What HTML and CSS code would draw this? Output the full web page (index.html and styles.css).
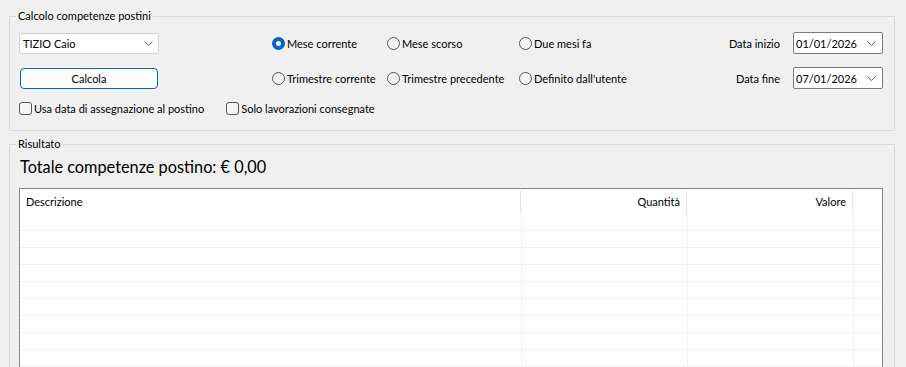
FILE: index.html
```html
<!DOCTYPE html>
<html lang="it">

<head>
	<meta charset="utf-8">
	<title>Calcolo competenze postini</title>
	<link rel="stylesheet" href="styles.css">
</head>

<body>
	<div class="window">
		<!-- parametri di calcolo -->
		<fieldset class="group group-calc">
			<legend>Calcolo competenze postini</legend>
			<div class="calc-grid">
				<div class="combo">
					<span>TIZIO Caio</span>
					<svg class="chevron" width="9" height="5" viewBox="0 0 9 5"><path d="M0.5 0.5 L4.5 4.5 L8.5 0.5" fill="none" stroke="#606060" stroke-width="1"/></svg>
				</div>
				<label class="radio r1 checked"><span class="dot"></span>Mese corrente</label>
				<label class="radio r2"><span class="dot"></span>Mese scorso</label>
				<label class="radio r3"><span class="dot"></span>Due mesi fa</label>
				<span class="date-label">Data inizio</span>
				<div class="date-box">
					<span>01/01/2026</span>
					<svg class="chevron" width="9" height="5" viewBox="0 0 9 5"><path d="M0.5 0.5 L4.5 4.5 L8.5 0.5" fill="none" stroke="#606060" stroke-width="1"/></svg>
				</div>

				<button class="btn">Calcola</button>
				<label class="radio r1"><span class="dot"></span>Trimestre corrente</label>
				<label class="radio r2"><span class="dot"></span>Trimestre precedente</label>
				<label class="radio r3"><span class="dot"></span>Definito dall'utente</label>
				<span class="date-label">Data fine</span>
				<div class="date-box">
					<span>07/01/2026</span>
					<svg class="chevron" width="9" height="5" viewBox="0 0 9 5"><path d="M0.5 0.5 L4.5 4.5 L8.5 0.5" fill="none" stroke="#606060" stroke-width="1"/></svg>
				</div>

				<div class="checks">
					<label class="check"><span class="box"></span>Usa data di assegnazione al postino</label>
					<label class="check"><span class="box"></span>Solo lavorazioni consegnate</label>
				</div>
			</div>
		</fieldset>

		<!-- risultato -->
		<fieldset class="group group-result">
			<legend>Risultato</legend>
			<h1 class="total">Totale competenze postino: € 0,00</h1>
			<div class="grid-view">
				<div class="grid-head">
					<div class="cell c-desc">Descrizione</div>
					<div class="cell c-qty">Quantità</div>
					<div class="cell c-val">Valore</div>
					<div class="cell c-pad"></div>
				</div>
				<div class="grid-body">
					<div class="row"><div class="cell c-desc"></div><div class="cell c-qty"></div><div class="cell c-val"></div><div class="cell c-pad"></div></div>
					<div class="row"><div class="cell c-desc"></div><div class="cell c-qty"></div><div class="cell c-val"></div><div class="cell c-pad"></div></div>
					<div class="row"><div class="cell c-desc"></div><div class="cell c-qty"></div><div class="cell c-val"></div><div class="cell c-pad"></div></div>
					<div class="row"><div class="cell c-desc"></div><div class="cell c-qty"></div><div class="cell c-val"></div><div class="cell c-pad"></div></div>
					<div class="row"><div class="cell c-desc"></div><div class="cell c-qty"></div><div class="cell c-val"></div><div class="cell c-pad"></div></div>
					<div class="row"><div class="cell c-desc"></div><div class="cell c-qty"></div><div class="cell c-val"></div><div class="cell c-pad"></div></div>
					<div class="row"><div class="cell c-desc"></div><div class="cell c-qty"></div><div class="cell c-val"></div><div class="cell c-pad"></div></div>
					<div class="row"><div class="cell c-desc"></div><div class="cell c-qty"></div><div class="cell c-val"></div><div class="cell c-pad"></div></div>
					<div class="row"><div class="cell c-desc"></div><div class="cell c-qty"></div><div class="cell c-val"></div><div class="cell c-pad"></div></div>
					<div class="row"><div class="cell c-desc"></div><div class="cell c-qty"></div><div class="cell c-val"></div><div class="cell c-pad"></div></div>
				</div>
			</div>
		</fieldset>
	</div>
</body>

</html>
```

FILE: styles.css
```css
/* common css */
* {
	margin: 0;
	padding: 0;
	box-sizing: border-box;
}

html,
body {
	height: 100%;
	overflow: hidden;
}

body {
	font-family: 'Lato', 'Liberation Sans', sans-serif;
	font-size: 11px;
	color: #000;
	background-color: #f0f0f0;
}

.window {
	padding-top: 9px;
}

/* group boxes */
.group {
	margin: 0 11px 0 9px;
	border: 1px solid #dcdcdc;
	min-width: 0;
}

.group legend {
	margin-left: -3px;
	padding: 0 2px;
	line-height: 14px;
}

.group-calc {
	padding: 9px 11px 12px 9px;
}

.group-result {
	margin-top: 6px;
	padding: 6px 11px 0 9px;
	height: 400px;
}

/* calcolo */
.calc-grid {
	display: grid;
	grid-template-columns: 140px 113px 115px 132px 1fr auto 90px;
	grid-template-rows: 22px 22px 16px;
	row-gap: 13px;
	align-items: center;
}

.calc-grid > .radio.r1 {
	grid-column: 3;
}

.calc-grid > .radio.r2 {
	grid-column: 4;
}

.calc-grid > .radio.r3 {
	grid-column: 5;
}

.combo {
	grid-column: 1;
	height: 21px;
	display: flex;
	align-items: center;
	justify-content: space-between;
	padding: 0 5px 0 3px;
	background-color: #fff;
	border: 1px solid #d0d0d0;
	border-radius: 3px;
}

.chevron {
	display: block;
}

.btn {
	grid-column: 1;
	height: 21px;
	margin: 0 1px;
	font: inherit;
	background-color: #fdfdfd;
	border: 1px solid #0067c0;
	border-radius: 4px;
}

.radio {
	display: flex;
	align-items: center;
	gap: 2px;
	white-space: nowrap;
}

.radio .dot {
	width: 13px;
	height: 13px;
	border-radius: 50%;
	border: 1px solid #555;
	background-color: #f5f5f5;
	flex-shrink: 0;
}

.radio.checked .dot {
	border: 4px solid #0067c0;
	background-color: #fff;
}

.date-label {
	grid-column: 6;
	justify-self: end;
	padding-right: 13px;
}

.date-box {
	grid-column: 7;
	height: 22px;
	display: flex;
	align-items: center;
	justify-content: space-between;
	padding: 0 6px 0 2px;
	background-color: #fff;
	border: 1px solid #7a7a7a;
	border-radius: 2px;
}

.checks {
	grid-column: 1 / 6;
	display: flex;
	gap: 22px;
	margin-top: -3px;
}

.check {
	display: flex;
	align-items: center;
	gap: 2px;
}

.check .box {
	width: 13px;
	height: 13px;
	border: 1px solid #555;
	border-radius: 3px;
	background-color: #f5f5f5;
}

/* risultato */
.total {
	font-size: 16.3px;
	font-weight: normal;
	line-height: 20px;
	margin-left: 1px;
}

.grid-view {
	margin-top: 11px;
	height: 300px;
	background-color: #fff;
	border: 1px solid #828790;
}

.grid-head,
.row {
	display: flex;
}

.grid-head {
	height: 25px;
	padding-top: 1px;
}

.grid-head .cell {
	line-height: 24px;
	padding: 0 6px;
	border-right: 1px solid #e5e5e5;
}

.grid-head .c-desc {
	width: 501px;
}

.grid-head .c-qty,
.grid-head .c-val {
	width: 166px;
	text-align: right;
}

.grid-head .c-pad {
	border-right: none;
}

.row {
	height: 17px;
	margin: 0 1px 0 0;
}

.row .cell {
	border-bottom: 1px solid #f0f0f0;
	border-right: 1px solid #f0f0f0;
}

.row .c-desc {
	width: 502px;
}

.row .c-qty,
.row .c-val {
	width: 166px;
}

.row .c-pad {
	flex: 1;
	border-right: none;
}
```
